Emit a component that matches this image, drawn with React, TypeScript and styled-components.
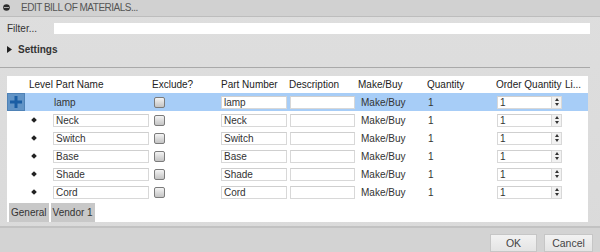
import React from 'react';
import styled, { createGlobalStyle } from 'styled-components';

const GlobalStyle = createGlobalStyle`
    html, body {
        margin: 0;
        padding: 0;
        width: 600px;
        height: 252px;
        overflow: hidden;
        background: #dcdcdc;
    }
    * {
        box-sizing: border-box;
    }
`;

const Dialog = styled.div`
    width: 600px;
    height: 252px;
    display: flex;
    flex-direction: column;
    font-family: 'Liberation Sans', Arial, sans-serif;
    font-size: 10px;
    color: #262626;
    background: linear-gradient(180deg, #dedede 0%, #dadada 100%);
`;

const TitleBar = styled.div`
    height: 18px;
    display: flex;
    align-items: center;
    padding-left: 3px;
    background: #d1d1d1;
    border-bottom: 1px solid #bdbdbd;
    color: #555;
    font-size: 10px;
    letter-spacing: -0.5px;
`;

const TitleText = styled.span`
    margin-left: 11px;
`;

const FilterRow = styled.div`
    display: flex;
    align-items: center;
    height: 12px;
    margin-top: 6px;
    padding-left: 7px;
`;

const FilterLabel = styled.span`
    width: 47px;
    color: #333;
`;

const FilterInput = styled.div`
    width: 536px;
    height: 11px;
    background: #fff;
`;

const SettingsRow = styled.div`
    display: flex;
    align-items: center;
    gap: 6px;
    height: 14px;
    margin-top: 9px;
    padding-left: 7px;
    font-weight: bold;
    color: #333;
`;

const Divider = styled.div`
    width: 590px;
    height: 1px;
    margin-top: 11px;
    background: #a9a9a9;
`;

const TablePanel = styled.div`
    margin: 8px 0 0 7px;
    width: 581px;
    height: 147px;
    background: #fff;
    display: flex;
    flex-direction: column;
`;

const Grid = styled.div`
    display: grid;
    grid-template-columns: 22px 24px 99px 69px 68px 69px 69px 69px 69px 23px;
`;

const HeaderRow = styled(Grid)`
    height: 17px;
    align-items: center;
    color: #222;
    white-space: nowrap;
`;

const HeaderCell = styled.div<{ $span?: number }>`
    grid-column: span ${(p) => p.$span ?? 1};
    overflow: hidden;
`;

const Row = styled(Grid)<{ $selected?: boolean }>`
    height: 18px;
    align-items: center;
    background: ${(p) => (p.$selected ? '#a7cdf7' : 'transparent')};
`;

const Cell = styled.div<{ $pad?: number }>`
    display: flex;
    align-items: center;
    height: 100%;
    padding-left: ${(p) => p.$pad ?? 0}px;
    color: #333;
    white-space: nowrap;
`;

const PlusBox = styled.div`
    width: 18px;
    height: 18px;
    background: #6294c6;
    border: 1px solid #4f82b6;
    display: flex;
    align-items: center;
    justify-content: center;
`;

const Diamond = styled.div`
    width: 4px;
    height: 4px;
    margin-left: 3px;
    background: #222;
    transform: rotate(45deg);
`;

const TextBox = styled.div<{ $width: number }>`
    width: ${(p) => p.$width}px;
    height: 13px;
    border: 1px solid #d8d8d8;
    border-top-color: #cfcfcf;
    background: #fff;
    padding-left: 2px;
    display: flex;
    align-items: center;
    color: #333;
`;

const CheckBox = styled.div`
    width: 11px;
    height: 11px;
    margin-left: 1px;
    border: 1px solid #7b7b7b;
    border-radius: 2px;
    background: linear-gradient(180deg, #f4f4f4 0%, #d6d6d6 60%, #c4c4c4 100%);
`;

const Spinner = styled.div`
    width: 10px;
    height: 13px;
    border: 1px solid #d8d8d8;
    border-left: none;
    background: #f2f2f2;
    display: flex;
    flex-direction: column;
    align-items: center;
    justify-content: space-around;
`;

const Arrow = styled.div<{ $up?: boolean }>`
    width: 0;
    height: 0;
    border-left: 2px solid transparent;
    border-right: 2px solid transparent;
    ${(p) => (p.$up ? 'border-bottom: 3px solid #333;' : 'border-top: 3px solid #333;')}
`;

const Tabs = styled.div`
    display: flex;
    gap: 2px;
    margin: 2px 0 0 2px;
`;

const Tab = styled.div`
    height: 19px;
    padding: 0 2px;
    display: flex;
    align-items: center;
    background: #c8c8c8;
    color: #333;
`;

const Footer = styled.div`
    margin-top: 4px;
    flex: 1;
    border-top: 2px solid #c2c2c2;
    background: #d3d3d3;
    display: flex;
    justify-content: flex-end;
    align-items: flex-start;
    gap: 7px;
    padding: 6px 7px 0 0;
`;

const Button = styled.div<{ $width: number }>`
    width: ${(p) => p.$width}px;
    height: 18px;
    background: linear-gradient(180deg, #f2f2f2 0%, #e4e4e4 100%);
    border: 1px solid #c6c6c6;
    display: flex;
    align-items: center;
    justify-content: center;
    font-size: 10.5px;
    color: #444;
`;

const parts = ['Neck', 'Switch', 'Base', 'Shade', 'Cord'];

function QtyInput() {
    return (
        <Cell $pad={1}>
            <TextBox $width={55}>1</TextBox>
            <Spinner>
                <Arrow $up />
                <Arrow />
            </Spinner>
        </Cell>
    );
}

export default function App() {
    return (
        <Dialog>
            <GlobalStyle />
            <TitleBar>
                <svg width="7" height="7" viewBox="0 0 7 7">
                    <circle cx="3.5" cy="3.5" r="3.3" fill="#2a2a2a" />
                    <rect x="1" y="3" width="5" height="1" fill="#aaa" />
                </svg>
                <TitleText>EDIT BILL OF MATERIALS...</TitleText>
            </TitleBar>
            <FilterRow>
                <FilterLabel>Filter...</FilterLabel>
                <FilterInput />
            </FilterRow>
            <SettingsRow>
                <svg width="5" height="7" viewBox="0 0 5 7">
                    <polygon points="0,0 5,3.5 0,7" fill="#222" />
                </svg>
                Settings
            </SettingsRow>
            <Divider />
            <TablePanel>
                <HeaderRow>
                    <HeaderCell />
                    <HeaderCell $span={2}>Level Part Name</HeaderCell>
                    <HeaderCell>Exclude?</HeaderCell>
                    <HeaderCell>Part Number</HeaderCell>
                    <HeaderCell>Description</HeaderCell>
                    <HeaderCell>Make/Buy</HeaderCell>
                    <HeaderCell>Quantity</HeaderCell>
                    <HeaderCell>Order Quantity</HeaderCell>
                    <HeaderCell>Li...</HeaderCell>
                </HeaderRow>
                <Row $selected>
                    <Cell>
                        <PlusBox>
                            <svg width="12" height="12" viewBox="0 0 12 12">
                                <rect x="4.5" y="0" width="3" height="12" fill="#1b5ea4" />
                                <rect x="0" y="4.5" width="12" height="3" fill="#1b5ea4" />
                            </svg>
                        </PlusBox>
                    </Cell>
                    <Cell />
                    <Cell $pad={1}>lamp</Cell>
                    <Cell $pad={1}>
                        <CheckBox />
                    </Cell>
                    <Cell>
                        <TextBox $width={66}>lamp</TextBox>
                    </Cell>
                    <Cell $pad={1}>
                        <TextBox $width={65} />
                    </Cell>
                    <Cell $pad={3}>Make/Buy</Cell>
                    <Cell $pad={1}>1</Cell>
                    <QtyInput />
                    <Cell />
                </Row>
                {parts.map((name) => (
                    <Row key={name}>
                        <Cell />
                        <Cell>
                            <Diamond />
                        </Cell>
                        <Cell>
                            <TextBox $width={96}>{name}</TextBox>
                        </Cell>
                        <Cell $pad={1}>
                            <CheckBox />
                        </Cell>
                        <Cell>
                            <TextBox $width={66}>{name}</TextBox>
                        </Cell>
                        <Cell $pad={1}>
                            <TextBox $width={65} />
                        </Cell>
                        <Cell $pad={3}>Make/Buy</Cell>
                        <Cell $pad={1}>1</Cell>
                        <QtyInput />
                        <Cell />
                    </Row>
                ))}
                <Tabs>
                    <Tab>General</Tab>
                    <Tab>Vendor 1</Tab>
                </Tabs>
            </TablePanel>
            <Footer>
                <Button $width={47}>OK</Button>
                <Button $width={49}>Cancel</Button>
            </Footer>
        </Dialog>
    );
}
